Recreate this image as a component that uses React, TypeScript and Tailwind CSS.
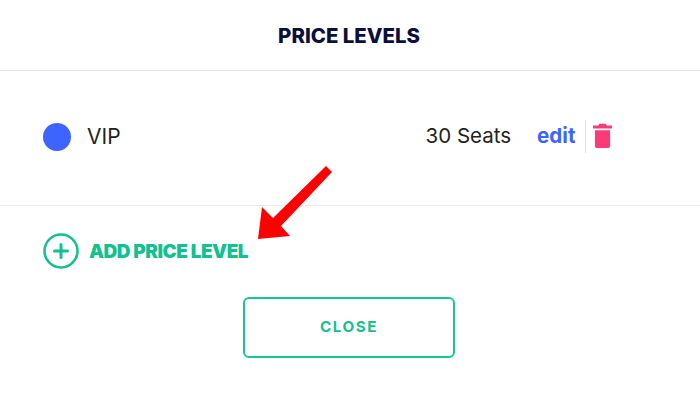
export default function App() {
  return (
    <main className="relative w-[700px] h-[405px] bg-white overflow-hidden font-['Inter',sans-serif]">
      <div className="h-[71px] flex items-center justify-center border-b border-[#e8e8e8] pt-[2px] pr-[2px]">
        <h1 className="text-[20.4px] font-extrabold text-[#0a0f3c]">PRICE LEVELS</h1>
      </div>

      <div className="h-[135px] flex items-center pl-[43px] pb-[3px] border-b border-[#ececec]">
        <span className="w-[28px] h-[28px] rounded-full bg-[#3d64ff]" />
        <span className="ml-[16px] text-[21px] text-[#222222]">VIP</span>
        <span className="ml-[305px] text-[20.5px] text-[#222222]">30 Seats</span>
        <button className="ml-[26px] text-[20.6px] font-bold leading-none text-[#3d64ff]">edit</button>
        <div className="ml-[10px] w-px h-[33px] bg-[#e2e2e2]" />
        <svg className="ml-[7px] mb-[2px]" width="19" height="26" viewBox="0 0 20 26" fill="#f93c78">
          <path d="M6.500 0h7l1 2H20v3H0V2h5.500z" />
          <path d="M2 7h16v16.500a2 2 0 0 1-2 2H4a2 2 0 0 1-2-2z" />
        </svg>
      </div>

      <div className="flex items-center pl-[43px] pt-[27px]">
        <svg width="36" height="36" viewBox="0 0 36 36" fill="none" stroke="#12c090" strokeWidth="2.500">
          <circle cx="18" cy="18" r="16.500" />
          <path d="M18 11.500v13M11.500 18h13" strokeWidth="3" strokeLinecap="round" />
        </svg>
        <span className="ml-[10px] pt-[2px] text-[19px] font-black tracking-[-0.5px] text-[#12c090]">ADD PRICE LEVEL</span>
      </div>

      <div className="flex justify-center mt-[28px] pr-[2px]">
        <button className="w-[212px] h-[61px] rounded-[6px] border-2 border-[#12c994] text-[15.200px] font-bold tracking-[1.500px] text-[#12c090]">
          CLOSE
        </button>
      </div>

      {/* annotation arrow on top of the screenshot */}
      <svg className="absolute left-0 top-0 pointer-events-none" width="700" height="405" viewBox="0 0 700 405">
        <polygon points="326,166 332,172 281,226 290,236 258,239 262,207 273,218" fill="#ff0000" />
      </svg>
    </main>
  );
}
